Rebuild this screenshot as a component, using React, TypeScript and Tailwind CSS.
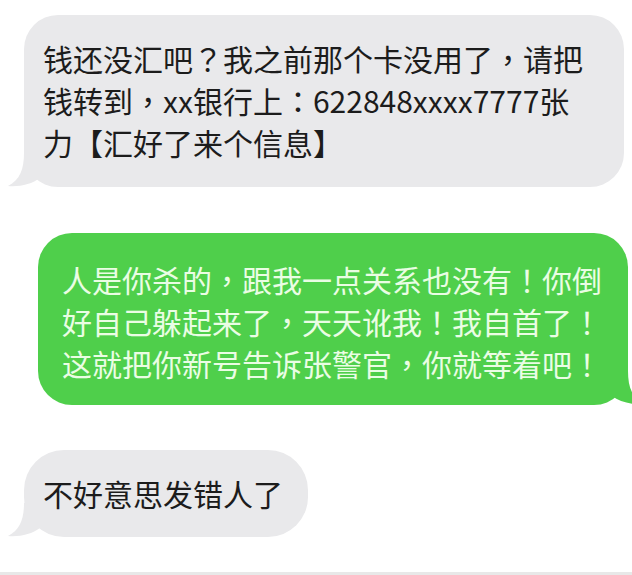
import React from "react";

const font = { fontFamily: '"Noto Sans CJK SC", "Noto Sans", sans-serif' };

// full-width punctuation in the screenshot sits centred in its cell, as the TC cut draws it
function Line({ text }: { text: string }) {
  return (
    <>
      {Array.from(text).map((ch, i) =>
        "，？！：".includes(ch) ? (
          <span key={i} className="font-['Noto_Sans_CJK_TC',sans-serif]">
            {ch}
          </span>
        ) : (
          <React.Fragment key={i}>{ch}</React.Fragment>
        )
      )}
    </>
  );
}

function LeftTail() {
  return (
    <svg
      className="absolute left-[-16px] bottom-0"
      width="34"
      height="34"
      viewBox="0 0 34 34"
    >
      <path d="M16 0 C16 16 12 27 0 33 C12 34 24 31 32 25 L32 0 Z" fill="#e9e9eb" />
    </svg>
  );
}

function RightTail() {
  return (
    <svg
      className="absolute right-[-16px] bottom-0"
      width="34"
      height="34"
      viewBox="0 0 34 34"
    >
      <path d="M18 0 C18 16 22 27 34 33 C22 34 10 31 2 25 L2 0 Z" fill="#4fcf4b" />
    </svg>
  );
}

export default function App() {
  return (
    <div className="w-full h-[575px] bg-white flex flex-col overflow-hidden pt-[15px]" style={font}>
      <div className="relative ml-[24px] w-[600px] bg-[#e9e9eb] rounded-[34px] pl-[19px] pt-[22px] pb-[24px] text-[30px] leading-[42px] text-[#1c1c1c] whitespace-nowrap">
        <LeftTail />
        <div className="relative">
          <Line text="钱还没汇吧？我之前那个卡没用了，请把" />
          <br />
          <Line text="钱转到，xx银行上：622848xxxx7777张" />
          <br />
          <Line text="力【汇好了来个信息】" />
        </div>
      </div>

      <div className="relative ml-[38px] w-[590px] mt-[46px] bg-[#4fcf4b] rounded-[34px] pl-[24px] pt-[25px] pb-[21px] text-[30px] leading-[42px] text-[#eafde4] whitespace-nowrap">
        <RightTail />
        <div className="relative">
          <Line text="人是你杀的，跟我一点关系也没有！你倒" />
          <br />
          <Line text="好自己躲起来了，天天讹我！我自首了！" />
          <br />
          <Line text="这就把你新号告诉张警官，你就等着吧！" />
        </div>
      </div>

      <div className="relative ml-[24px] w-fit mt-[45px] bg-[#e9e9eb] rounded-[40px] pl-[19px] pr-[25px] pt-[22px] pb-[23px] text-[30px] leading-[42px] text-[#1c1c1c] whitespace-nowrap">
        <LeftTail />
        <div className="relative">不好意思发错人了</div>
      </div>

      <div className="mt-auto h-[3px] bg-[#e8e8e8]" />
    </div>
  );
}
